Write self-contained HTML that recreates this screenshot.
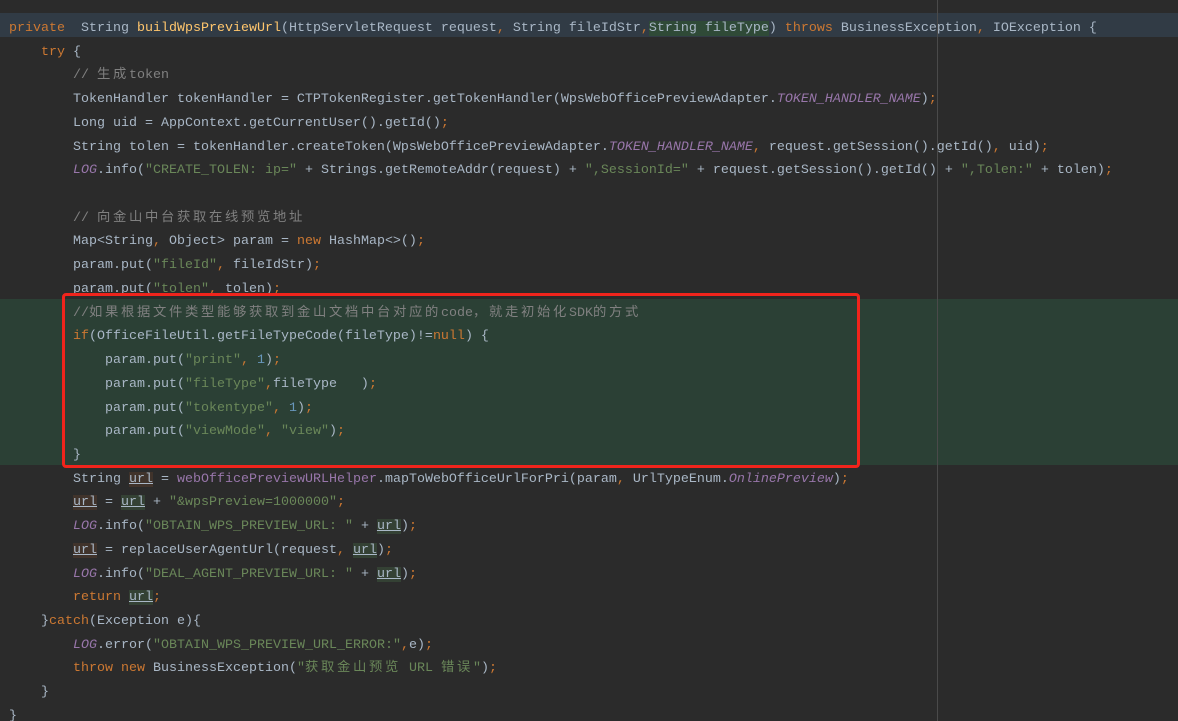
<!DOCTYPE html>
<html style="height:721px;overflow:hidden"><head><meta charset="utf-8"><style>
body{margin:0;width:1178px;height:721px;background:#2b2b2b;overflow:hidden;position:relative}
.hl1{position:absolute;left:0;top:13px;width:1178px;height:24px;background:#313b45}
.grn{position:absolute;left:0;top:299px;width:1178px;height:166px;background:#2b4035}
.box{position:absolute;left:62px;top:293px;width:792px;height:169px;border:3px solid #f0241c;border-radius:4px}
.gut{position:absolute;left:937px;top:0;width:1px;height:721px;background:#4a4a4a}
.code{position:absolute;left:9px;top:19px;margin:0;font-family:"Liberation Mono",monospace;font-size:13.33px;color:#a9b7c6}
.code div{white-space:pre;height:23.73px;line-height:20px;overflow:visible}
.k{color:#cc7832}.s{color:#6a8759}.c{color:#808080}.n{color:#6897bb}.m{color:#ffc66d}.p{color:#9876aa}.i{color:#9876aa;font-style:italic}
.z{font-family:"Noto Sans CJK SC",sans-serif;letter-spacing:2.67px;line-height:1}
.w{background:#40332b;text-decoration:underline}.r{background:#344134;text-decoration:underline}
.g{background:#2f4a37}
</style></head><body>
<div class="hl1"></div><div class="grn"></div><div class="gut"></div>
<div class="code">
<div><span class="k">private</span>  String <span class="m">buildWpsPreviewUrl</span>(HttpServletRequest request<span class="k">,</span> String fileIdStr<span class="k">,</span><span class="g">String fileType</span>) <span class="k">throws</span> BusinessException<span class="k">,</span> IOException {</div>
<div>    <span class="k">try</span> {</div>
<div>        <span class="c">// <span class="z">生成</span>token</span></div>
<div>        TokenHandler tokenHandler = CTPTokenRegister.getTokenHandler(WpsWebOfficePreviewAdapter.<span class="i">TOKEN_HANDLER_NAME</span>)<span class="k">;</span></div>
<div>        Long uid = AppContext.getCurrentUser().getId()<span class="k">;</span></div>
<div>        String tolen = tokenHandler.createToken(WpsWebOfficePreviewAdapter.<span class="i">TOKEN_HANDLER_NAME</span><span class="k">,</span> request.getSession().getId()<span class="k">,</span> uid)<span class="k">;</span></div>
<div>        <span class="i">LOG</span>.info(<span class="s">"CREATE_TOLEN: ip="</span> + Strings.getRemoteAddr(request) + <span class="s">",SessionId="</span> + request.getSession().getId() + <span class="s">",Tolen:"</span> + tolen)<span class="k">;</span></div>
<div> </div>
<div>        <span class="c">// <span class="z">向金山中台获取在线预览地址</span></span></div>
<div>        Map&lt;String<span class="k">,</span> Object&gt; param = <span class="k">new</span> HashMap&lt;&gt;()<span class="k">;</span></div>
<div>        param.put(<span class="s">"fileId"</span><span class="k">,</span> fileIdStr)<span class="k">;</span></div>
<div>        param.put(<span class="s">"tolen"</span><span class="k">,</span> tolen)<span class="k">;</span></div>
<div>        <span class="c">//<span class="z">如果根据文件类型能够获取到金山文档中台对应的</span>code<span class="z">，就走初始化</span>SDK<span class="z">的方式</span></span></div>
<div>        <span class="k">if</span>(OfficeFileUtil.getFileTypeCode(fileType)!=<span class="k">null</span>) {</div>
<div>            param.put(<span class="s">"print"</span><span class="k">,</span> <span class="n">1</span>)<span class="k">;</span></div>
<div>            param.put(<span class="s">"fileType"</span><span class="k">,</span>fileType   )<span class="k">;</span></div>
<div>            param.put(<span class="s">"tokentype"</span><span class="k">,</span> <span class="n">1</span>)<span class="k">;</span></div>
<div>            param.put(<span class="s">"viewMode"</span><span class="k">,</span> <span class="s">"view"</span>)<span class="k">;</span></div>
<div>        }</div>
<div>        String <span class="w">url</span> = <span class="p">webOfficePreviewURLHelper</span>.mapToWebOfficeUrlForPri(param<span class="k">,</span> UrlTypeEnum.<span class="i">OnlinePreview</span>)<span class="k">;</span></div>
<div>        <span class="w">url</span> = <span class="r">url</span> + <span class="s">"&amp;wpsPreview=1000000"</span><span class="k">;</span></div>
<div>        <span class="i">LOG</span>.info(<span class="s">"OBTAIN_WPS_PREVIEW_URL: "</span> + <span class="r">url</span>)<span class="k">;</span></div>
<div>        <span class="w">url</span> = replaceUserAgentUrl(request<span class="k">,</span> <span class="r">url</span>)<span class="k">;</span></div>
<div>        <span class="i">LOG</span>.info(<span class="s">"DEAL_AGENT_PREVIEW_URL: "</span> + <span class="r">url</span>)<span class="k">;</span></div>
<div>        <span class="k">return</span> <span class="r">url</span><span class="k">;</span></div>
<div>    }<span class="k">catch</span>(Exception e){</div>
<div>        <span class="i">LOG</span>.error(<span class="s">"OBTAIN_WPS_PREVIEW_URL_ERROR:"</span><span class="k">,</span>e)<span class="k">;</span></div>
<div>        <span class="k">throw new</span> BusinessException(<span class="s">"<span class="z">获取金山预览</span> URL <span class="z">错误</span>"</span>)<span class="k">;</span></div>
<div>    }</div>
<div>}</div>
</div>
<div class="box"></div>
</body></html>
